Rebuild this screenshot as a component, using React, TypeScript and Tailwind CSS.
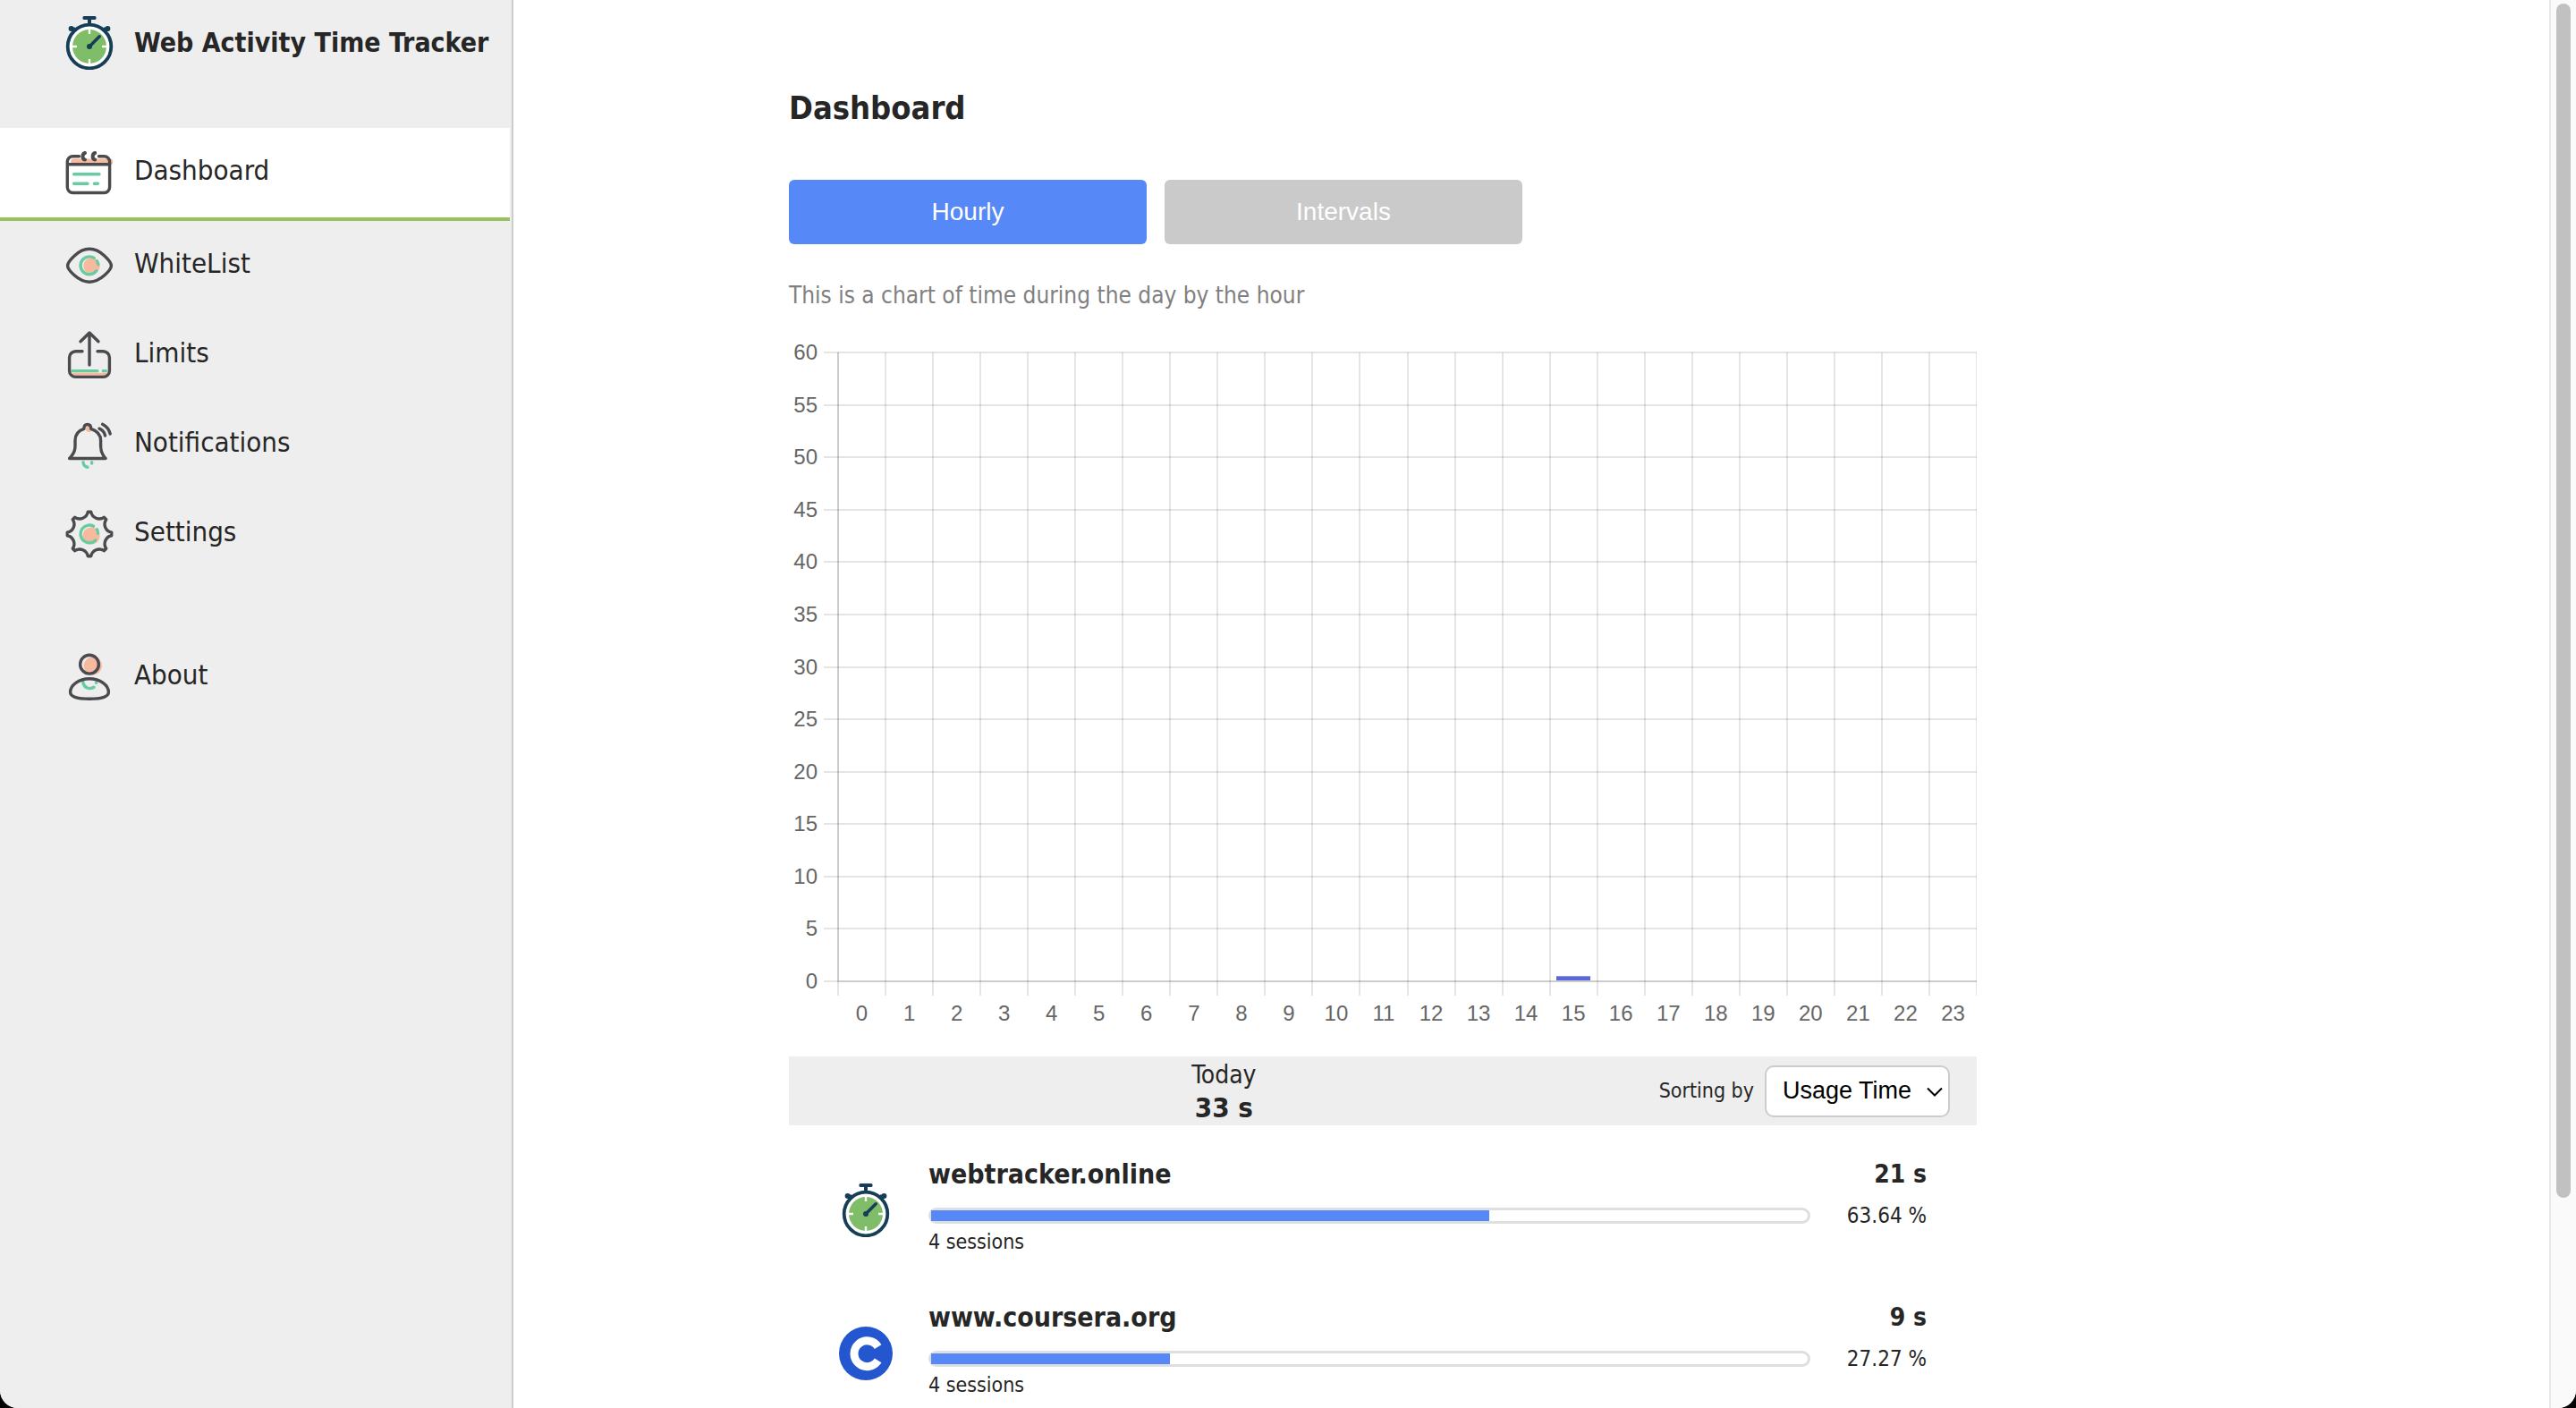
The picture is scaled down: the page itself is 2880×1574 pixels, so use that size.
import type { ReactNode } from 'react';

const DARK = '#4b4b4f';
const GREEN = '#66cca1';
const PEACH = '#f7ba9f';

function Icon({ children }: { children: ReactNode }) {
  return (
    <svg
      viewBox="0 0 60 60"
      className="size-15 shrink-0"
      fill="none"
      stroke={DARK}
      strokeWidth="3.4"
      strokeLinecap="round"
      strokeLinejoin="round"
      aria-hidden="true"
    >
      {children}
    </svg>
  );
}

function Stopwatch() {
  return (
    <svg viewBox="0 0 60 60" className="size-15 shrink-0" aria-hidden="true">
      <g fill="#173e57">
        <rect x="22.5" y="0" width="15" height="4" rx="1.5" />
        <rect x="28" y="3" width="4" height="8" />
        <circle cx="9.6" cy="14" r="3" />
        <circle cx="50.4" cy="14" r="3" />
        <path d="M9 16l4-4 4 4-4 4zM51 16l-4-4-4 4 4 4z" />
      </g>
      <circle cx="30" cy="34" r="24.3" fill="#fff" stroke="#173e57" strokeWidth="3.8" />
      <circle cx="30" cy="34" r="19" fill="#80bd68" />
      <path d="M30 14v6M30 48v6M10 34h6M44 34h6" stroke="#fff" strokeWidth="2.4" />
      <path d="M30 34L41.2 22.8" stroke="#173e57" strokeWidth="3.6" strokeLinecap="round" />
      <circle cx="30" cy="34" r="3" fill="#173e57" />
    </svg>
  );
}

function CourseraLogo() {
  return (
    <svg viewBox="0 0 60 60" className="size-15 shrink-0" aria-hidden="true">
      <circle cx="30" cy="30" r="30" fill="#2457cf" />
      <path d="M43.6 22.6A14.4 14.4 0 1 0 43.6 37.9" fill="none" stroke="#fff" strokeWidth="9" />
    </svg>
  );
}

function CalendarIcon() {
  return (
    <Icon>
      <rect x="9.3" y="14.5" width="46.7" height="7" rx="3" fill={PEACH} stroke="none" />
      <path d="M18.5 11.7H11.5A6.2 6.2 0 0 0 5.3 17.9V46.3A6.2 6.2 0 0 0 11.5 52.5H46.4A6.2 6.2 0 0 0 52.6 46.3V17.9A6.2 6.2 0 0 0 46.4 11.7H40.5M5.3 20.8H52.6" />
      <path d="M25 8C21.6 9 21.6 15 25 15.4M36.2 8C32.8 9 32.8 15 36.2 15.4" strokeWidth="4" />
      <path d="M12.6 31.8H41M12.6 42.3H28M35.4 42.3H39.4" stroke={GREEN} />
    </Icon>
  );
}

function EyeIcon() {
  return (
    <Icon>
      <circle cx="32.5" cy="30.3" r="9.2" fill={PEACH} stroke="none" />
      <path d="M5.6 30C5.6 26 17 11.3 30 11.3S54.4 26 54.4 30 43 48.2 30 48.2 5.6 34 5.6 30Z" />
      <path d="M35.2 21.4A9.9 9.9 0 1 0 37.8 35.8M38.4 24.8A9.9 9.9 0 0 1 39.8 28.6" stroke={GREEN} />
    </Icon>
  );
}

function ShareIcon() {
  return (
    <Icon>
      <path d="M12 51.4H50" stroke={PEACH} />
      <path d="M11 47.7H39M45.2 47.7H48.4" stroke={GREEN} strokeWidth="3.2" />
      <path d="M30 5.5V41M20 14.7L30 5L40 14.7M22 25.7H14.6A7 7 0 0 0 7.6 32.7V47.4A7 7 0 0 0 14.6 54.4H45.4A7 7 0 0 0 52.4 47.4V32.7A7 7 0 0 0 45.4 25.7H39" />
    </Icon>
  );
}

function BellIcon() {
  return (
    <Icon>
      <circle cx="29.4" cy="12.6" r="3.4" fill={PEACH} stroke="none" />
      <path d="M7.6 45.5C12 41 14 37 14 32V25.5C14 18.5 17.5 14.5 23.8 12.4C23.8 9 25 7.5 27.8 7.5S31.8 9 31.8 12.4C38.1 14.5 42.6 18.5 42.6 25.5V32C42.6 37 44 41 48 45.5Z" />
      <path d="M41 12.2C44.5 13.5 46.8 16.5 47.6 20M44.6 7.2C49 9.5 52 13 53.2 18" />
      <path d="M23 49.6C23 52.5 25 55 28 55.2M32.6 49.6V51" stroke={GREEN} />
    </Icon>
  );
}

function gearPath() {
  const point = (deg: number) => {
    const a = (deg * Math.PI) / 180;
    return `${(30 + 24.8 * Math.cos(a)).toFixed(2)} ${(30 + 24.8 * Math.sin(a)).toFixed(2)}`;
  };
  let d = `M${point(-4)}`;
  for (let i = 0; i < 8; i++) {
    d += `L${point(i * 45 + 4)}A9.4 9.4 0 0 0 ${point(i * 45 + 41)}`;
  }
  return `${d}Z`;
}

function GearIcon() {
  return (
    <Icon>
      <circle cx="32" cy="32" r="9.6" fill={PEACH} stroke="none" />
      <path d={gearPath()} />
      <path d="M34.6 21.2A9.9 9.9 0 1 0 36.8 37M38.4 24.8A9.9 9.9 0 0 1 39.6 29.2" stroke={GREEN} />
    </Icon>
  );
}

function PersonIcon() {
  return (
    <Icon>
      <circle cx="33.8" cy="17.4" r="10.2" fill={PEACH} stroke="none" />
      <circle cx="30" cy="15.7" r="10.4" />
      <path d="M22.8 35.5C23.4 41.5 29.5 44.5 35 41.2M37.6 36.2V36.4" stroke={GREEN} />
      <path d="M30 31.8C42 31.8 51.4 39 51.4 46.8C51.4 52.5 42 54.3 30 54.3S8.6 52.5 8.6 46.8C8.6 39 18 31.8 30 31.8Z" />
    </Icon>
  );
}

const NAV = [
  { label: 'Dashboard', icon: <CalendarIcon />, item: 'mr-0.5 border-b-4 border-[#97c25f] bg-white' },
  { label: 'WhiteList', icon: <EyeIcon />, item: '' },
  { label: 'Limits', icon: <ShareIcon />, item: '' },
  { label: 'Notifications', icon: <BellIcon />, item: '' },
  { label: 'Settings', icon: <GearIcon />, item: '' },
  { label: 'About', icon: <PersonIcon />, item: 'mt-15' },
];

function Sidebar() {
  return (
    <aside className="w-[574px] shrink-0 border-r-2 border-[#ccc] bg-[#eee]">
      <div className="flex h-[143px] items-start gap-5 pt-[18px] pl-[70px]">
        <Stopwatch />
        <span className="text-[30px] leading-[60px] font-bold whitespace-nowrap">Web Activity Time Tracker</span>
      </div>
      <nav>
        <ul>
          {NAV.map(({ label, icon, item }) => (
            <li key={label} className={item}>
              <a href={`#${label.toLowerCase()}`} className="flex h-25 items-center gap-5 pl-[70px] text-[31px]">
                {icon}
                <span className="pb-1.5">{label}</span>
              </a>
            </li>
          ))}
        </ul>
      </nav>
    </aside>
  );
}

const HOURS = Array.from({ length: 24 }, (_, i) => i);
const MINUTES = Array.from({ length: 13 }, (_, i) => i * 5);
const PLOT = { left: 55, right: 1328, top: 19, bottom: 722 };

function HourlyChart() {
  const column = (PLOT.right - PLOT.left) / 24;
  const y = (minutes: number) => PLOT.bottom - ((PLOT.bottom - PLOT.top) * minutes) / 60;
  return (
    <svg
      viewBox="0 0 1328 780"
      className="mt-[23px] block w-full font-['Liberation_Sans',sans-serif] text-[24px]"
      role="img"
      aria-label="Time by hour"
    >
      <g stroke="#000" strokeOpacity="0.1" strokeWidth="2" shapeRendering="crispEdges">
        {MINUTES.map((m) => (
          <line key={m} x1={39} x2={1328} y1={Math.round(y(m))} y2={Math.round(y(m))} />
        ))}
        {[...HOURS, 24].map((h) => (
          <line
            key={h}
            x1={Math.round(PLOT.left + h * column)}
            x2={Math.round(PLOT.left + h * column)}
            y1={PLOT.top}
            y2={PLOT.bottom + 16}
          />
        ))}
        <path d={`M${PLOT.left} ${PLOT.top}V${PLOT.bottom}H1328`} fill="none" />
      </g>
      <rect x={858} y={716} width={38} height={5} fill="#5b68da" />
      <path d="M858 716.5H896" stroke="#8b90e4" />
      <g fill="#666">
        {MINUTES.map((m) => (
          <text key={m} x={32} y={y(m) + 8} textAnchor="end">
            {m}
          </text>
        ))}
        {HOURS.map((h) => (
          <text key={h} x={PLOT.left + (h + 0.5) * column} y={766} textAnchor="middle">
            {h}
          </text>
        ))}
      </g>
    </svg>
  );
}

const SITES = [
  { name: 'webtracker.online', icon: <Stopwatch />, sessions: '4 sessions', time: '21 s', percent: 63.64 },
  { name: 'www.coursera.org', icon: <CourseraLogo />, sessions: '4 sessions', time: '9 s', percent: 27.27 },
];

function SiteRow({ name, icon, sessions, time, percent }: (typeof SITES)[number]) {
  return (
    <li className="flex h-40 gap-10 pr-14 pl-14">
      <div className="pt-[31px]">{icon}</div>
      <div className="min-w-0 flex-1">
        <div className="text-[30px] leading-[42px] font-bold">{name}</div>
        <div
          role="progressbar"
          aria-label={name}
          aria-valuenow={percent}
          aria-valuemin={0}
          aria-valuemax={100}
          className="mt-4 h-[18px] rounded-full border-3 border-[#dfdfdf]"
        >
          <div className="h-full bg-[#5689f7]" style={{ width: `${percent}%` }} />
        </div>
        <div className="text-[23px] leading-10">{sessions}</div>
      </div>
      <div className="w-[90px] text-right">
        <div className="text-[28px] leading-[42px] font-bold whitespace-nowrap">{time}</div>
        <div className="mt-1.5 text-[24px] leading-[38px] whitespace-nowrap">{percent} %</div>
      </div>
    </li>
  );
}

export default function App() {
  return (
    <div className="h-screen bg-black">
      <div className="flex h-full overflow-hidden rounded-b-[20px] bg-white font-['DejaVu_Sans_Condensed','DejaVu_Sans',sans-serif] text-[#262626]">
        <Sidebar />
        <main className="min-w-0 flex-1 overflow-hidden">
          <div className="ml-[308px] max-w-[1328px]">
            <h1 className="pt-[96px] text-[36px] leading-[50px] font-bold">Dashboard</h1>
            <div className="mt-[55px] flex gap-5 font-['Liberation_Sans',sans-serif] text-[28px] text-white">
              <button type="button" className="h-18 w-100 rounded-md bg-[#5689f7]">
                Hourly
              </button>
              <button type="button" className="h-18 w-100 rounded-md bg-[#cacaca]">
                Intervals
              </button>
            </div>
            <p className="mt-9 text-[26px] leading-[43px] text-[#808080]">
              This is a chart of time during the day by the hour
            </p>
            <HourlyChart />
            <section className="mt-[26px] flex h-[77px] items-center bg-[#eee]">
              <div className="flex-1 text-center">
                <div className="text-[28px] leading-9">Today</div>
                <div className="text-[31px] leading-9 font-bold">33 s</div>
              </div>
              <div className="flex items-center gap-3 pr-[30px]">
                <label htmlFor="sorting" className="text-[23px]">
                  Sorting by
                </label>
                <div className="relative">
                  <select
                    id="sorting"
                    className="h-[58px] w-[207px] appearance-none rounded-[10px] border-2 border-[#ccc] bg-white pl-[18px] font-['Liberation_Sans',sans-serif] text-[27px] text-black"
                  >
                    <option>Usage Time</option>
                    <option>Sessions</option>
                  </select>
                  <svg
                    viewBox="0 0 18 12"
                    className="pointer-events-none absolute top-6 right-2 h-3 w-[18px]"
                    fill="none"
                    stroke="#000"
                    strokeWidth="2"
                    aria-hidden="true"
                  >
                    <path d="M1 1.5L9 9.5L17 1.5" />
                  </svg>
                </div>
              </div>
            </section>
            <ul className="mt-[34px]">
              {SITES.map((site) => (
                <SiteRow key={site.name} {...site} />
              ))}
            </ul>
          </div>
        </main>
        <div className="w-[30px] shrink-0 border-l-2 border-[#e8e8e8] bg-[#fafafa] pt-1 pl-1.5" aria-hidden="true">
          <div className="h-[85%] w-4 rounded-full bg-[#c1c1c1]" />
        </div>
      </div>
    </div>
  );
}
